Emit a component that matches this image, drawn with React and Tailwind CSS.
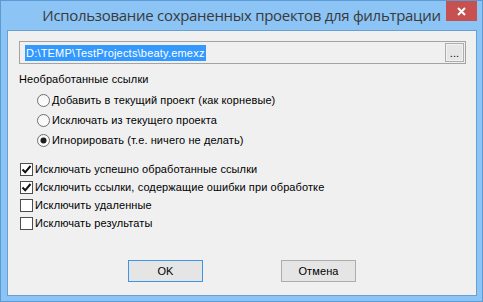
import React from "react";

const sans = "font-['Liberation_Sans',Arial,sans-serif]";

const radios = [
    { label: "Добавить в текущий проект (как корневые)", checked: false },
    { label: "Исключать из текущего проекта", checked: false },
    { label: "Игнорировать (т.е. ничего не делать)", checked: true },
];

const checks = [
    { label: "Исключать успешно обработанные ссылки", checked: true },
    { label: "Исключить ссылки, содержащие ошибки при обработке", checked: true },
    { label: "Исключить удаленные", checked: false },
    { label: "Исключать результаты", checked: false },
];

const Radio = ({ checked }) => (
    <svg width="13" height="13" viewBox="0 0 13 13" className="shrink-0">
        <defs>
            <linearGradient id="rg" x1="0" y1="0" x2="0" y2="1">
                <stop offset="0" stopColor="#f4f4f4" />
                <stop offset="1" stopColor="#ffffff" />
            </linearGradient>
        </defs>
        <circle cx="6.5" cy="6.5" r="6" fill="url(#rg)" stroke="#6f6f6f" strokeWidth="1" />
        {checked && <circle cx="6.5" cy="6.5" r="3" fill="#1e1e1e" />}
    </svg>
);

const Check = ({ checked }) => (
    <span className="w-[13px] h-[13px] shrink-0 border border-[#4d4d4d] bg-white flex items-center justify-center">
        {checked && (
            <svg width="11" height="11" viewBox="0 0 11 11">
                <path d="M1.5 5.5 L4.2 8.3 L9.5 2" fill="none" stroke="#111" strokeWidth="2" />
            </svg>
        )}
    </span>
);

const App = () => {
    return (
        <div className="w-[483px] h-[302px] border border-[#5d9ad3] bg-[#8bc4f5] flex flex-col">
            {/* title bar */}
            <div className="relative h-[29px] flex justify-center">
                <span className="font-['Open_Sans',sans-serif] text-[15px] leading-[20px] mt-[4px] text-[#3a3a3a] tracking-[-0.3px]">
                    Использование сохраненных проектов для фильтрации
                </span>
                <div className="absolute top-0 right-[5px] w-[31px] h-[20px] bg-[#c75050] flex items-center justify-center">
                    <svg width="9" height="9" viewBox="0 0 9 9">
                        <path d="M1 1 L8 8 M8 1 L1 8" stroke="#fff" strokeWidth="2" />
                    </svg>
                </div>
            </div>

            {/* client area */}
            <div className={`ml-[6px] w-[470px] h-[266px] border border-[#6a9fd2] bg-[#f0f0f0] flex flex-col ${sans} text-[11px] leading-[13px] tracking-[0.1px] text-black`}>
                <div className="mt-[10px] ml-[11px] w-[447px] h-[23px] border border-[#a3a3a3] bg-[#f0f0f0] flex items-center">
                    <span className="ml-[5px] bg-[#3399ff] text-white h-[16px] leading-[16px] px-[1px] tracking-[0.2px]">
                        D:\TEMP\TestProjects\beaty.emexz
                    </span>
                    <button className="ml-auto mr-[1px] w-[19px] h-[19px] border border-[#adadad] bg-[#e6e6e6] flex items-end justify-center">
                        <span className="border border-[#f2f2f2] w-full h-full flex items-end justify-center leading-[10px] pb-[2px] text-[11px]">...</span>
                    </button>
                </div>

                <div className="mt-[9px] ml-[11px]">Необработанные ссылки</div>

                <div className="mt-[4px] ml-[29px] flex flex-col">
                    {radios.map((r) => (
                        <div key={r.label} className="h-[20px] flex items-center gap-[2px]">
                            <Radio checked={r.checked} />
                            <span>{r.label}</span>
                        </div>
                    ))}
                </div>

                <div className="mt-[10px] ml-[12px] flex flex-col">
                    {checks.map((c) => (
                        <div key={c.label} className="h-[18px] flex items-center gap-[2px]">
                            <Check checked={c.checked} />
                            <span>{c.label}</span>
                        </div>
                    ))}
                </div>

                <div className="mt-[28px] ml-[120px] flex gap-[78px]">
                    <button className="w-[75px] h-[22px] border border-[#3d95e8] bg-[#e5e5e5]">OK</button>
                    <button className="w-[75px] h-[22px] border border-[#adadad] bg-[#e5e5e5]">Отмена</button>
                </div>
            </div>
        </div>
    );
};

export default App;
